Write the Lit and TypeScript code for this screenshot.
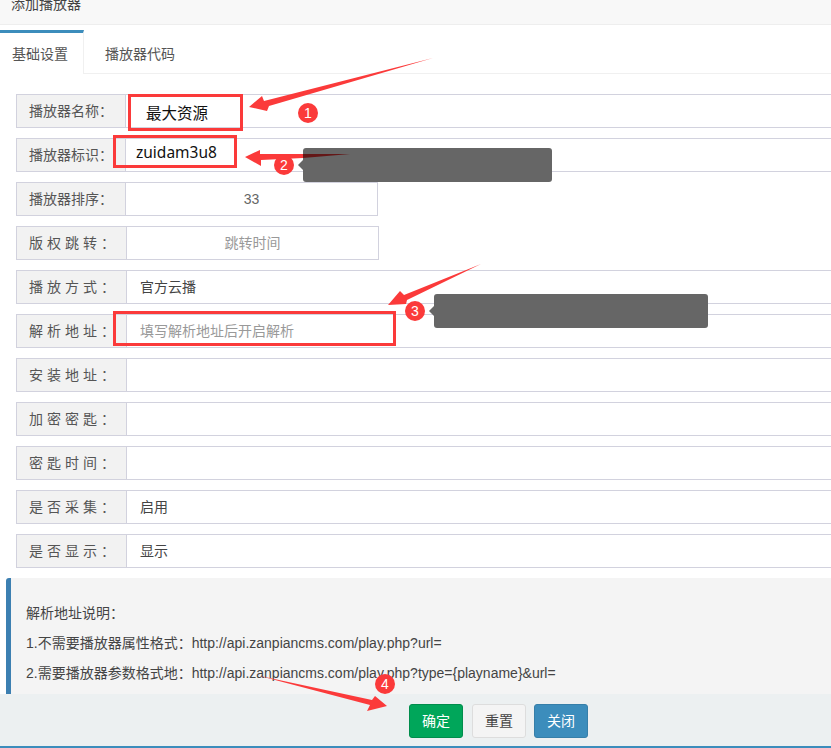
import { LitElement, html, css, svg } from "lit";
import { customElement } from "lit/decorators.js";
import { classMap } from "lit/directives/class-map.js";

type Row = { label: string; value?: string; spaced?: boolean; short?: boolean; center?: boolean; ph?: boolean };

const ROWS: Row[] = [
  { label: "播放器名称：" },
  { label: "播放器标识：" },
  { label: "播放器排序：", value: "33", short: true, center: true },
  { label: "版权跳转：", value: "跳转时间", spaced: true, short: true, center: true, ph: true },
  { label: "播放方式：", value: "官方云播", spaced: true },
  { label: "解析地址：", value: "填写解析地址后开启解析", spaced: true, ph: true },
  { label: "安装地址：", spaced: true },
  { label: "加密密匙：", spaced: true },
  { label: "密匙时间：", spaced: true },
  { label: "是否采集：", value: "启用", spaced: true },
  { label: "是否显示：", value: "显示", spaced: true },
];

const RED = "#fb3a3a";

@customElement("app-root")
export class AppRoot extends LitElement {
  static styles = css`
    :host {
      display: flex;
      flex-direction: column;
      position: relative;
      height: 748px;
      overflow: hidden;
      background: #fff;
      color: #555;
      font: 14px/20px "Liberation Sans", "Noto Sans CJK SC", sans-serif;
    }
    .title {
      flex: none;
      height: 24px;
      border-bottom: 1px solid #eee;
      background: #f8f8f8;
      padding-left: 11px;
      line-height: 8px;
      overflow: hidden;
      color: #444;
    }
    .tabs {
      flex: none;
      display: flex;
      height: 43px;
      margin-top: 5px;
      border-bottom: 1px solid #f0f0f0;
    }
    .tab {
      box-sizing: border-box;
      height: 44px;
      line-height: 42px;
      padding-left: 12px;
      color: #555;
    }
    .tab.active {
      width: 84px;
      border-top: 3px solid #3c8dbc;
      border-right: 1px solid #f0f0f0;
      background: #fff;
      line-height: 42px;
    }
    .tab.other {
      padding-left: 21px;
      padding-top: 3px;
    }
    main {
      flex: 1;
      min-height: 0;
      overflow: hidden;
    }
    form {
      display: flex;
      flex-direction: column;
      gap: 10px;
      padding: 20px 0 0 16px;
      margin-right: -10px;
    }
    .row {
      display: flex;
      height: 34px;
    }
    .label,
    .field {
      box-sizing: border-box;
      height: 34px;
      line-height: 32px;
      border: 1px solid #d2d2de;
      white-space: nowrap;
    }
    .label {
      flex: none;
      width: 110px;
      padding-left: 12px;
      background: #f2f2f2;
      color: #555;
    }
    .label.spaced {
      width: 111px;
      letter-spacing: 4px;
    }
    .field {
      flex: 1;
      min-width: 0;
      border-left: none;
      padding-left: 13px;
      color: #444;
    }
    .field.short {
      flex: none;
      width: 252px;
    }
    .field.center {
      padding-left: 0;
      text-align: center;
      color: #666;
    }
    .field.ph {
      color: #999;
    }
    .notice {
      margin: 10px 0 0 6px;
      padding: 20px 15px;
      border-left: 5px solid #3c7fb1;
      border-radius: 3px 0 0 3px;
      background: #f4f4f4;
      color: #444;
      line-height: 30px;
    }
    footer {
      flex: none;
      box-sizing: border-box;
      height: 54px;
      display: flex;
      padding: 10px 0 0 409px;
      background: #ecf0f1;
      border-bottom: 2px solid #3c8dbc;
    }
    .btn {
      box-sizing: border-box;
      width: 54px;
      height: 34px;
      line-height: 32px;
      text-align: center;
      border: 1px solid;
      border-radius: 3px;
    }
    .ok {
      margin-right: 9px;
      background: #00a65a;
      border-color: #008d4c;
      color: #fff;
    }
    .reset {
      margin-right: 8px;
      background: #f4f4f4;
      border-color: #ddd;
      color: #444;
    }
    .close {
      background: #3c8dbc;
      border-color: #367fa9;
      color: #fff;
    }
    .marks {
      position: absolute;
      left: 0;
      top: 0;
      width: 831px;
      height: 748px;
      pointer-events: none;
    }
    .marks text {
      font: 14px "Liberation Sans", sans-serif;
      fill: #fff;
      text-anchor: middle;
    }
    .box {
      position: absolute;
      box-sizing: border-box;
      border: 3px solid #fb3a3a;
      display: flex;
      align-items: center;
      color: #111;
      font-size: 15.5px;
    }
    .box1 {
      left: 128px;
      top: 94px;
      width: 115px;
      height: 37px;
      padding: 3px 0 0 15px;
    }
    .box2 {
      left: 113px;
      top: 135px;
      width: 124px;
      height: 33px;
      padding: 1px 0 0 20px;
      font-family: "Noto Sans", sans-serif;
    }
    .box3 {
      left: 113px;
      top: 311px;
      width: 283px;
      height: 35px;
    }
    .tip {
      position: absolute;
      height: 34px;
      border-radius: 3px;
      background: #666;
    }
    .tip::before {
      content: "";
      position: absolute;
      left: -5px;
      top: 12px;
      border-style: solid;
      border-width: 5px 5px 5px 0;
      border-color: transparent #666 transparent transparent;
    }
    .tip1 {
      left: 303px;
      top: 148px;
      width: 249px;
    }
    .tip2 {
      left: 434px;
      top: 294px;
      width: 274px;
    }
    .tail {
      position: absolute;
      left: 0;
      top: 0;
      width: 50px;
      height: 12px;
    }
  `;

  private arrow(points: string) {
    return svg`<polygon points=${points} fill=${RED} />`;
  }

  private badge(cx: number, cy: number, n: number) {
    return svg`<circle cx=${cx} cy=${cy} r="10" fill=${RED} /><text x=${cx} y=${cy + 5}>${n}</text>`;
  }

  render() {
    return html`
      <div class="title">添加播放器</div>
      <div class="tabs">
        <div class="tab active">基础设置</div>
        <div class="tab other">播放器代码</div>
      </div>
      <main>
        <form>
          ${ROWS.map(
            (r) => html`
              <div class="row">
                <div class=${classMap({ label: true, spaced: !!r.spaced })}>${r.label}</div>
                <div class=${classMap({ field: true, short: !!r.short, center: !!r.center, ph: !!r.ph })}>${r.value ?? ""}</div>
              </div>
            `
          )}
        </form>
        <div class="notice">
          <div>解析地址说明：</div>
          <div>1.不需要播放器属性格式：http://api.zanpiancms.com/play.php?url=</div>
          <div>2.需要播放器参数格式地：http://api.zanpiancms.com/play.php?type={playname}&amp;url=</div>
        </div>
      </main>
      <footer>
        <div class="btn ok">确定</div>
        <div class="btn reset">重置</div>
        <div class="btn close">关闭</div>
      </footer>
      <svg class="marks" viewBox="0 0 831 748">
        ${this.arrow("249,107 262,96 264,101 433,58 269,106 267,111")}
        ${this.arrow("245,157 260,150 260,154 303,154 303,158 261,160 261,166")}
        ${this.arrow("388,305 400,291 404,295 481,264 407,300 406,304")}
        ${this.arrow("258,675.5 372,700 375,696 387,706 367,711 370,705")}
        ${this.badge(308, 113, 1)} ${this.badge(284, 165, 2)} ${this.badge(415, 311, 3)} ${this.badge(385, 684, 4)}
      </svg>
      <div class="box box1">最大资源</div>
      <div class="box box2">zuidam3u8</div>
      <div class="box box3"></div>
      <div class="tip tip1">
        <svg class="tail" viewBox="0 0 50 12"><polygon points="0,6 47,6 0,10" fill="#641717" /></svg>
      </div>
      <div class="tip tip2"></div>
    `;
  }
}
